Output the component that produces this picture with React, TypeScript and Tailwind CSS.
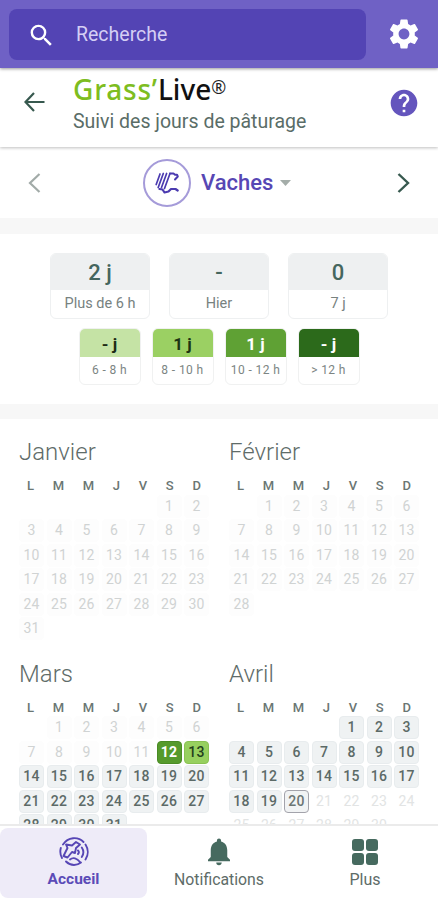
import React from 'react';
import { MdSearch, MdSettings, MdHelp, MdNotifications } from 'react-icons/md';

type Month = {
  name: string;
  offset: number; // empty cells before the 1st
  days: number;
  activeFrom?: number;
  activeTo?: number;
};

const months: Month[] = [
  { name: 'Janvier', offset: 5, days: 31 },
  { name: 'Février', offset: 1, days: 28 },
  { name: 'Mars', offset: 1, days: 31, activeFrom: 12, activeTo: 31 },
  { name: 'Avril', offset: 4, days: 30, activeFrom: 1, activeTo: 20 },
];

const weekDays = ['L', 'M', 'M', 'J', 'V', 'S', 'D'];

const totals = [
  { value: '2 j', label: 'Plus de 6 h' },
  { value: '-', label: 'Hier' },
  { value: '0', label: '7 j' },
];

const ranges = [
  { value: '- j', label: '6 - 8 h', color: 'bg-[#c5e3a5] text-[#1d2b16]' },
  { value: '1 j', label: '8 - 10 h', color: 'bg-[#9bd063] text-[#1d3313]' },
  { value: '1 j', label: '10 - 12 h', color: 'bg-[#5fa134] text-white' },
  { value: '- j', label: '> 12 h', color: 'bg-[#2c6a1b] text-white' },
];

const dayClass = (month: Month, day: number): string => {
  if (month.name === 'Mars' && day === 12) return 'bg-[#559a2c] border-[#4a8b25] text-white font-bold';
  if (month.name === 'Mars' && day === 13) return 'bg-[#97d05f] border-[#89c252] text-[#23401d] font-medium';
  if (month.name === 'Avril' && day === 20) return 'bg-[#f1f3f4] border-[#a3a3ab] text-[#6b7573] font-medium';
  if (month.activeFrom && month.activeTo && day >= month.activeFrom && day <= month.activeTo) {
    return 'bg-[#eff2f3] border-[#e8ecee] text-[#5c6a67] font-medium';
  }
  if (month.name === 'Avril') return 'border-transparent text-[#e2e4e4]';
  return 'bg-[#fdfdfd] border-transparent text-[#d0d3d3]';
};

const MonthGrid: React.FC<{ month: Month }> = ({ month }) => {
  return (
    <div className="h-[221.5px] w-[190px]">
      <h2 className="h-9 text-[24px] leading-[37px] font-light text-[#5f6c69]">{month.name}</h2>
      <div className="flex h-[24.5px] justify-between px-[8px] pt-[5px] text-[13px] leading-[21px] font-medium text-[#6a7673]">
        {weekDays.map((d, i) => <span key={i}>{d}</span>)}
      </div>
      <div className="grid grid-cols-7 gap-x-[2.5px] gap-y-[1.5px]">
        {Array.from({ length: month.offset }, (_, i) => <span key={`empty-${i}`} />)}
        {Array.from({ length: month.days }, (_, i) => (
          <span
            key={i}
            className={`flex h-[23px] items-center justify-center rounded-[4px] border text-[14px] tracking-[0.2px] ${dayClass(month, i + 1)}`}
          >
            {i + 1}
          </span>
        ))}
      </div>
    </div>
  );
};

const CowIcon: React.FC = () => (
  <svg width="24" height="22" viewBox="0 0 24 22" fill="none" stroke="#4b3bb0" strokeLinecap="round" strokeLinejoin="round">
    <path d="M5 2 1.200 12.500M8.300 1.500 3.200 15.500M11.600 1.500 6.500 15.500" strokeWidth="1.7" />
    <path d="M15 1.500 9.500 16.500" strokeWidth="1.7" />
    <path d="M15 1.500h3.500l1.500 1.200h2l.8 1.800-2.800 3" strokeWidth="2" />
    <path d="m4.500 17 3 .5 2 3 4-1 2.500-2.500h4.500l2.200 1.500" strokeWidth="2.200" />
  </svg>
);

const GrazingIcon: React.FC = () => (
  <svg width="30" height="30" viewBox="0 0 30 30" fill="none" stroke="#5746b5" strokeWidth="1.9" strokeLinecap="round" strokeLinejoin="round">
    <path d="M4 7.500C9-.2 19-.8 24.500 5" />
    <path d="M1.800 11C.8 15 1.500 18.500 3 21" />
    <path d="m4.500 19 4-8L7 7.500l6 1L17 5l4 2.500-4 3.500-1 5-3-1-4.500 5.500-4-1.500Z" />
    <path d="M7 24.500c2 2 5 3.500 8 3.500 2.500 0 5-1 7-2.500M11 22.500c3-2.500 7-1.500 10 2.500" />
    <path d="M19 13.500c1 1 1 2.500 0 3.500M22.800 10.500c2 3 2 6.500 0 9.500M26.500 7.500c3 4.500 3 10.500 0 15" />
  </svg>
);

const App: React.FC = () => {
  return (
    <div className="flex h-[900px] w-[438px] flex-col overflow-hidden bg-white font-['Roboto',sans-serif]">
      <header className="z-20 flex h-[68px] shrink-0 items-center bg-[#6f61c5] pl-[9px] shadow-[0_1px_3px_rgba(0,0,0,0.4)]">
        <div className="flex h-[51px] w-[357px] items-center rounded-lg bg-[#5344b4] pl-[18px]">
          <MdSearch className="mt-[2px] size-[29px] text-white" />
          <span className="pt-px pl-5 text-[19.500px] text-[#d5cff5]">Recherche</span>
        </div>
        <MdSettings className="ml-[20px] size-[36px] text-white" />
      </header>

      <div className="z-10 flex h-[79px] shrink-0 bg-white shadow-[0_1px_3px_rgba(0,0,0,0.25)]">
        <svg className="mt-[24px] ml-[24px]" width="21" height="20" viewBox="0 0 21 20" fill="none" stroke="#37594f" strokeWidth="2.2">
          <path d="M20.500 10H2M10 1 1.500 10l8.500 9" />
        </svg>
        <div className="ml-[28px] w-[300px]">
          <h1 className="flex h-[42px] items-center font-['Noto_Sans',sans-serif] text-[28px] leading-[42px] font-medium text-[#111]">
            <span className="tracking-[0.8px] text-[#7ebd1f]">Grass’</span>Live<span className="-mt-1 font-['Open_Sans',sans-serif] text-[18px] font-normal text-[#222]">®</span>
          </h1>
          <p className="text-[19.500px] leading-6 text-[#5a6d67]">Suivi des jours de pâturage</p>
        </div>
        <MdHelp className="mt-[19px] ml-[15px] size-8 text-[#6455bd]" />
      </div>

      <div className="flex h-[71px] shrink-0 items-center px-[28px]">
        <svg width="13" height="20" viewBox="0 0 13 20" fill="none" stroke="#a2aba8" strokeWidth="2.200"><path d="M11.500 1 2 10l9.500 9" /></svg>
        <div className="ml-[102px] flex size-[48px] items-center justify-center rounded-full border-2 border-[#a59bd9]">
          <CowIcon />
        </div>
        <span className="ml-[10px] text-[22px] font-medium text-[#5747b4]">Vaches</span>
        <svg className="ml-[7px]" width="11" height="6" viewBox="0 0 11 6"><path d="M0 0h11L5.500 6Z" fill="#a4ada9" /></svg>
        <svg className="ml-auto" width="13" height="20" viewBox="0 0 13 20" fill="none" stroke="#37594f" strokeWidth="2.400"><path d="m1.500 1 9.500 9-9.500 9" /></svg>
      </div>

      <div className="h-4 shrink-0 bg-[#f7f7f7]" />

      <section className="h-[170px] shrink-0 pt-[19px]">
        <div className="flex justify-center gap-[19px]">
          {totals.map((t) => (
            <div key={t.label} className="h-[66px] w-[100px] overflow-hidden rounded-md border border-[#eef0f1] text-center">
              <div className="h-[36px] bg-[#eef0f1] text-[22px] leading-[38px] font-medium text-[#45665e]">{t.value}</div>
              <div className="text-[14.500px] leading-[27px] text-[#77827f]">{t.label}</div>
            </div>
          ))}
        </div>
        <div className="mt-[9px] flex justify-center gap-[11px]">
          {ranges.map((r) => (
            <div key={r.label} className="h-[57px] w-[62px] overflow-hidden rounded-md border border-[#f0f1f1] text-center">
              <div className={`h-[28px] text-[17px] leading-[31px] font-bold ${r.color}`}>{r.value}</div>
              <div className="text-[12px] leading-[27px] tracking-[0.4px] whitespace-nowrap text-[#7c8583]">{r.label}</div>
            </div>
          ))}
        </div>
      </section>

      <div className="h-[15px] shrink-0 bg-[#f7f7f7]" />

      <main className="grid min-h-0 flex-1 grid-cols-[190px_190px] content-start gap-x-[20px] overflow-hidden pt-[15px] pl-[19px]">
        {months.map((month) => <MonthGrid key={month.name} month={month} />)}
      </main>

      <nav className="grid h-[76px] shrink-0 grid-cols-3 border-t-2 border-[#ebebeb] bg-white pt-[2px] text-center text-[16px] text-[#5e6c68]">
        <div className="flex h-[70px] w-[147px] flex-col items-center rounded-lg bg-[#eeebf8] pt-[9px] text-[15.500px] font-bold text-[#5b4bb7]">
          <GrazingIcon />
          <span className="leading-[25px]">Accueil</span>
        </div>
        <div className="flex flex-col items-center pt-[7px]">
          <MdNotifications className="h-[33px] w-[34px] text-[#466a5f]" />
          <span className="text-[15.800px] leading-[24px]">Notifications</span>
        </div>
        <div className="flex flex-col items-center pt-[11px]">
          <div className="grid size-[26px] grid-cols-2 gap-[2px]">
            <span className="rounded-[3px] bg-[#466a5f]" />
            <span className="rounded-[3px] bg-[#466a5f]" />
            <span className="rounded-[3px] bg-[#466a5f]" />
            <span className="rounded-[3px] bg-[#466a5f]" />
          </div>
          <span className="mt-[3px] leading-[24px]">Plus</span>
        </div>
      </nav>
    </div>
  );
};

export default App;
